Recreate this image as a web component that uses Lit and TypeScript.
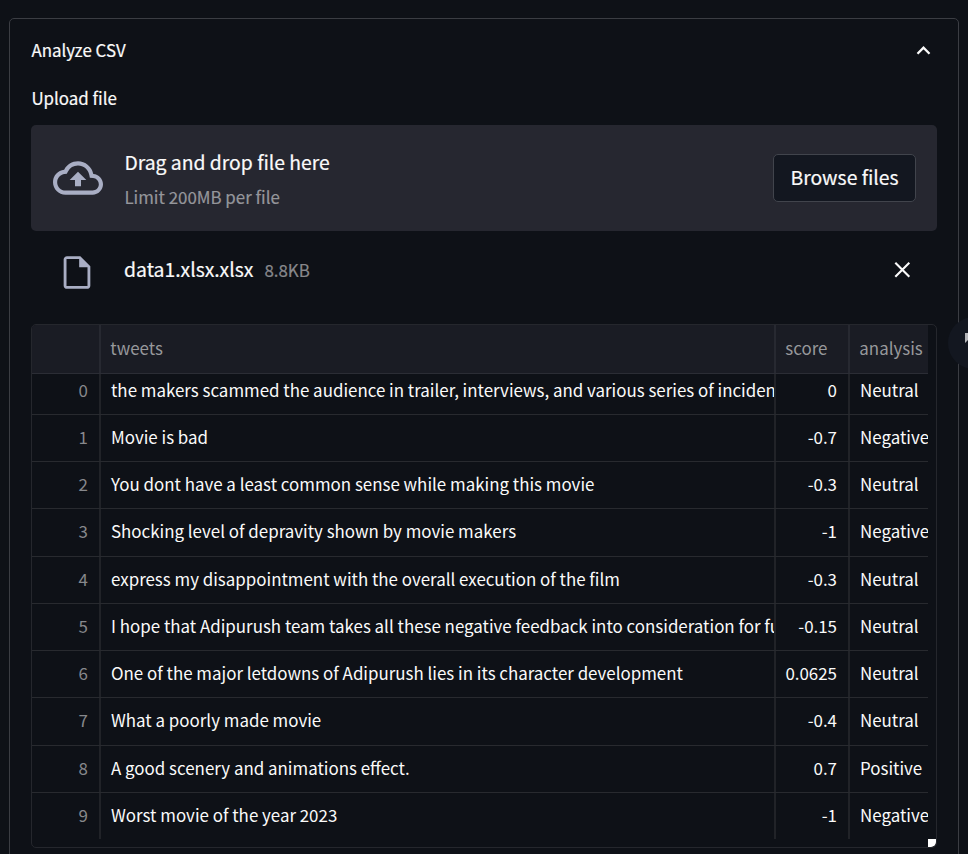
import { LitElement, html, css } from "lit";
import { customElement, property } from "lit/decorators.js";

interface Row {
  tweet: string;
  score: string;
  analysis: string;
}

const ROWS: Row[] = [
  { tweet: "the makers scammed the audience in trailer, interviews, and various series of incidents", score: "0", analysis: "Neutral" },
  { tweet: "Movie is bad", score: "-0.7", analysis: "Negative" },
  { tweet: "You dont have a least common sense while making this movie", score: "-0.3", analysis: "Neutral" },
  { tweet: "Shocking level of depravity shown by movie makers", score: "-1", analysis: "Negative" },
  { tweet: "express my disappointment with the overall execution of the film", score: "-0.3", analysis: "Neutral" },
  { tweet: "I hope that Adipurush team takes all these negative feedback into consideration for fu", score: "-0.15", analysis: "Neutral" },
  { tweet: "One of the major letdowns of Adipurush lies in its character development", score: "0.0625", analysis: "Neutral" },
  { tweet: "What a poorly made movie", score: "-0.4", analysis: "Neutral" },
  { tweet: "A good scenery and animations effect.", score: "0.7", analysis: "Positive" },
  { tweet: "Worst movie of the year 2023", score: "-1", analysis: "Negative" },
];

@customElement("file-uploader")
class FileUploader extends LitElement {
  static styles = css`
    :host { display: block; }
    .zone {
      display: flex; align-items: center; box-sizing: border-box;
      height: 106px; padding: 0 21px 0 22px; border-radius: 5px; background: #262730;
    }
    .cloud { width: 50px; height: 50px; margin-right: 21.4px; fill: #a9aec4; flex: none; }
    .text { flex: 1; padding-bottom: 2px; }
    .title { font-size: 19.35px; line-height: 32px; }
    .limit { font-size: 16.9px; line-height: 22px; margin-top: 8px; color: #95969b; }
    .browse {
      box-sizing: border-box; width: 143px; height: 48px; padding: 0 0 3px;
      border: 1px solid #41444c; border-radius: 5px; background: #131720;
      color: inherit; font: inherit; font-size: 19.35px;
    }
    .file { display: flex; align-items: center; height: 42px; margin-top: 20px; padding: 0 21px 0 26px; }
    .doc { width: 40px; height: 40px; margin-right: 27.1px; fill: #a9aec4; flex: none; }
    .info { flex: 1; display: flex; align-items: baseline; gap: 11px; padding-bottom: 6px; }
    .name { font-size: 19.35px; line-height: 30px; }
    .size { font-size: 16.9px; color: #87888c; }
    .close { width: 28px; height: 28px; margin-bottom: 5px; fill: none; stroke: #fafafa; stroke-width: 2.1; }
  `;

  render() {
    return html`
      <div class="zone">
        <svg class="cloud" viewBox="0 0 24 24">
          <path d="M19.35 10.04A7.49 7.49 0 0012 4C9.11 4 6.6 5.64 5.35 8.04A5.994 5.994 0 000 14c0 3.31 2.69 6 6 6h13c2.76 0 5-2.24 5-5 0-2.64-2.05-4.78-4.65-4.96zM19 18H6c-2.21 0-4-1.79-4-4 0-2.05 1.53-3.76 3.56-3.97l1.07-.11.5-.95A5.469 5.469 0 0112 6c2.62 0 4.88 1.86 5.39 4.43l.3 1.5 1.53.11A2.98 2.98 0 0122 15c0 1.65-1.35 3-3 3zM8 13h2.55v3h2.9v-3H16l-4-4-4 4z"/>
        </svg>
        <div class="text">
          <div class="title">Drag and drop file here</div>
          <div class="limit">Limit 200MB per file</div>
        </div>
        <button class="browse">Browse files</button>
      </div>
      <div class="file">
        <svg class="doc" viewBox="0 0 24 24">
          <path fill-rule="evenodd" d="M6 2.5c-1.1 0-2 .8-2 1.9v15.8c0 1.1.9 1.9 2 1.9h12c1.1 0 2-.8 2-1.9V8.5l-6-6H6zm-.3 1.7h7.6v5h5v11.2H5.7V4.2z"/>
        </svg>
        <div class="info"><span class="name">data1.xlsx.xlsx</span><span class="size">8.8KB</span></div>
        <svg class="close" viewBox="0 0 28 28"><path d="M7.3 6.7l14 14M21.3 6.7l-14 14"/></svg>
      </div>
    `;
  }
}

@customElement("data-grid")
class DataGrid extends LitElement {
  @property({ attribute: false }) rows: Row[] = [];

  static styles = css`
    :host {
      display: block; position: relative; box-sizing: border-box; height: 524px;
      border: 1px solid #25272d; border-radius: 5px; overflow: hidden; font-size: 16.92px;
      -webkit-text-stroke: 0;
    }
    .view { display: flex; flex-direction: column; width: 896px; height: 514px; overflow: hidden; }
    .row {
      display: grid; grid-template-columns: 69px 675px 74px 78px; flex: none;
      box-sizing: border-box; height: 47.25px; border-bottom: 1px solid #282a2f;
    }
    .row:last-child { border-bottom-color: transparent; }
    .head { height: 49px; background: #1a1c24; color: #97989b; border-bottom-color: #2b2d35; }
    .body { overflow: hidden; flex: 1; display: flex; flex-direction: column; justify-content: flex-end; }
    .body .row:last-child { margin-bottom: -1px; }
    .cell {
      box-sizing: border-box; overflow: hidden; white-space: nowrap; line-height: 43px;
      padding-left: 10px; border-right: 2px solid #212328;
    }
    .head .cell { line-height: 46px; padding-left: 9.3px; border-right-color: #272931; }
    .row .cell:last-child { border-right: 0; }
    .num { text-align: right; padding: 0 11px 0 0; }
    .index { color: #87888c; }
    .handle {
      position: absolute; right: 0; bottom: 0; width: 8px; height: 8px;
      background: #fff; border-bottom-right-radius: 5px;
    }
  `;

  render() {
    return html`
      <div class="view">
        <div class="row head">
          <div class="cell"></div>
          <div class="cell">tweets</div>
          <div class="cell">score</div>
          <div class="cell">analysis</div>
        </div>
        <div class="body">
          ${this.rows.map((r, i) => html`
            <div class="row">
              <div class="cell num index">${i}</div>
              <div class="cell">${r.tweet}</div>
              <div class="cell num">${r.score}</div>
              <div class="cell">${r.analysis}</div>
            </div>`)}
        </div>
      </div>
      <div class="handle"></div>
    `;
  }
}

@customElement("app-root")
class AppRoot extends LitElement {
  static styles = css`
    :host {
      display: block; position: relative; box-sizing: border-box; height: 854px; padding: 18px 9px 0;
      overflow: hidden; background: #0e1117; color: #fafafa;
      font-family: "Noto Sans CJK SC", "Noto Sans", sans-serif;
      -webkit-text-stroke: 0.2px;
    }
    .panel {
      box-sizing: border-box; height: 880px; padding: 0 21px;
      border: 1px solid #3b3d43; border-radius: 5px;
    }
    .header {
      display: flex; align-items: center; justify-content: space-between;
      height: 63px; padding-right: 4px; font-size: 16.9px;
    }
    .heading { padding: 0 0 2px 0.4px; }
    .chevron { width: 20px; height: 20px; fill: none; stroke: #fafafa; stroke-width: 2.3; }
    .label { height: 43px; line-height: 32px; font-size: 16.9px; padding-left: 0.4px; }
    data-grid { margin-top: 31px; }
    .bubble {
      position: absolute; left: 948px; top: 317px; width: 52px; height: 52px;
      border-radius: 50%; background: #131720;
    }
    .flag { position: absolute; left: 17px; top: 16px; width: 12px; height: 12px; fill: #b4b5b8; }
  `;

  render() {
    return html`
      <div class="panel">
        <div class="header">
          <span class="heading">Analyze CSV</span>
          <svg class="chevron" viewBox="0 0 20 20"><path d="M4.5 12.7L10.5 6.7l6 6"/></svg>
        </div>
        <div class="label">Upload file</div>
        <file-uploader></file-uploader>
        <data-grid .rows=${ROWS}></data-grid>
      </div>
      <div class="bubble">
        <svg class="flag" viewBox="0 0 12 12"><path d="M0 0h12v7H3L0 10z"/></svg>
      </div>
    `;
  }
}
